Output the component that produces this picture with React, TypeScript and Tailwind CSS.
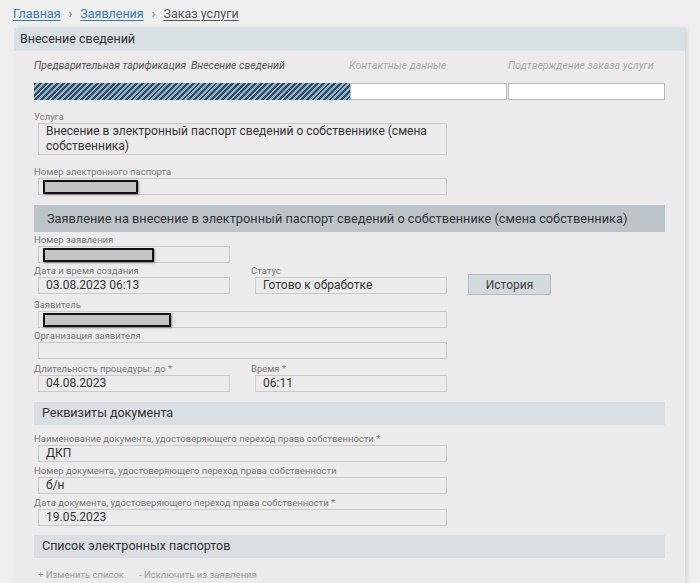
import React from "react";

const stripes =
  "bg-[repeating-linear-gradient(135deg,#2f4d66_0px,#2f4d66_2px,#8fb0c7_2px,#8fb0c7_4px)]";

function Label({ children }: { children: React.ReactNode }) {
  return <div className="h-[12px] leading-[12px] text-[9.5px] text-[#7a7a7a]">{children}</div>;
}

function Box({
  width = "w-[409px]",
  height = "h-[17px]",
  children,
}: {
  width?: string;
  height?: string;
  children?: React.ReactNode;
}) {
  return (
    <div
      className={`relative ml-[4px] ${width} ${height} border border-[#cacaca] bg-[#ebebeb] pl-[7px] text-[12px] leading-[15px] text-[#333]`}
    >
      {children}
    </div>
  );
}

function Redacted({ width }: { width: string }) {
  return (
    <div
      className={`absolute left-[4px] top-[1px] h-[14px] ${width} rounded-[1px] border-2 border-[#111] bg-[#c4c4c4] shadow-[1px_1px_2px_rgba(0,0,0,0.4)]`}
    />
  );
}

function SectionBar({ children, dark }: { children: React.ReactNode; dark?: boolean }) {
  return (
    <div
      className={
        dark
          ? "flex h-[27px] items-center bg-[#bcc4c9] pl-[13px] text-[12.75px] text-[#333]"
          : "flex h-[23px] items-center bg-[#d9dfe2] pl-[8px] text-[12.5px] text-[#333]"
      }
    >
      {children}
    </div>
  );
}

export default function App() {
  return (
    <div
      className="min-h-[583px] overflow-hidden bg-[#efefef] text-[#333]"
      style={{ fontFamily: 'Roboto, "Noto Sans", sans-serif' }}
    >
      {/* Breadcrumbs */}
      <div className="flex h-[28px] items-center gap-[8px] pl-[13px] text-[12.5px]">
        <span className="text-[#3b7bb0] underline decoration-[#3b7bb0] underline-offset-2">Главная</span>
        <span className="font-bold text-[#888]">›</span>
        <span className="text-[#3b7bb0] underline decoration-[#3b7bb0] underline-offset-2">Заявления</span>
        <span className="font-bold text-[#888]">›</span>
        <span className="text-[#555] underline underline-offset-2">Заказ услуги</span>
      </div>

      {/* Panel */}
      <div className="ml-[14px] min-h-[555px] w-[671px] bg-[#ebebeb] shadow-[2px_0_4px_rgba(0,0,0,0.12)]">
        <div className="flex h-[23px] items-center bg-[#d9e0e3] pl-[6px] text-[12.5px] text-[#333]">
          Внесение сведений
        </div>

        <div className="px-[20px]">
          {/* Steps */}
          <div className="grid grid-cols-[157px_158px_159px_157px] pt-[8px] text-[10.5px] italic leading-[14px]">
            <span className="text-[#555]">Предварительная тарификация</span>
            <span className="text-[#555]">Внесение сведений</span>
            <span className="text-[#aaa]">Контактные данные</span>
            <span className="text-[#aaa]">Подтверждение заказа услуги</span>
          </div>
          <div className="mt-[10px] flex h-[17px]">
            <div className={`w-[316px] ${stripes}`} />
            <div className="w-[157px] border border-[#b8b8b8] bg-white" />
            <div className="ml-[1px] w-[157px] border border-[#b8b8b8] bg-white" />
          </div>

          {/* Service */}
          <div className="mt-[11px]">
            <Label>Услуга</Label>
            <Box height="h-[32px]">
              Внесение в электронный паспорт сведений о собственнике (смена собственника)
            </Box>
          </div>
          <div className="mt-[11px]">
            <Label>Номер электронного паспорта</Label>
            <Box>
              <Redacted width="w-[95px]" />
            </Box>
          </div>

          <div className="mt-[10px]">
            <SectionBar dark>
              Заявление на внесение в электронный паспорт сведений о собственнике (смена собственника)
            </SectionBar>
          </div>

          <div className="mt-[2px]">
            <Label>Номер заявления</Label>
            <Box width="w-[192px]">
              <Redacted width="w-[111px]" />
            </Box>
          </div>

          <div className="mt-[2px] flex items-end">
            <div className="w-[217px]">
              <Label>Дата и время создания</Label>
              <Box width="w-[192px]">03.08.2023 06:13</Box>
            </div>
            <div className="w-[217px]">
              <Label>Статус</Label>
              <Box width="w-[192px]">Готово к обработке</Box>
            </div>
            <button className="mb-[-1px] h-[21px] w-[83px] border border-[#b4babe] bg-[#d3dadd] text-[12px] text-[#444]">
              История
            </button>
          </div>

          <div className="mt-[5px]">
            <Label>Заявитель</Label>
            <Box>
              <Redacted width="w-[128px]" />
            </Box>
          </div>
          <div className="mt-[2px]">
            <Label>Организация заявителя</Label>
            <Box />
          </div>

          <div className="mt-[4px] flex">
            <div className="w-[217px]">
              <Label>Длительность процедуры: до *</Label>
              <Box width="w-[192px]">04.08.2023</Box>
            </div>
            <div className="w-[217px]">
              <Label>Время *</Label>
              <Box width="w-[192px]">06:11</Box>
            </div>
          </div>

          <div className="mt-[10px]">
            <SectionBar>Реквизиты документа</SectionBar>
          </div>

          <div className="mt-[8px]">
            <Label>Наименование документа, удостоверяющего переход права собственности *</Label>
            <Box>ДКП</Box>
          </div>
          <div className="mt-[3px]">
            <Label>Номер документа, удостоверяющего переход права собственности</Label>
            <Box>б/н</Box>
          </div>
          <div className="mt-[3px]">
            <Label>Дата документа, удостоверяющего переход права собственности *</Label>
            <Box>19.05.2023</Box>
          </div>

          <div className="mt-[9px]">
            <SectionBar>Список электронных паспортов</SectionBar>
          </div>

          <div className="mt-[10px] flex gap-[15px] pl-[4px] text-[9.5px] text-[#999]">
            <span>+ Изменить список</span>
            <span>- Исключить из заявления</span>
          </div>
        </div>
      </div>
    </div>
  );
}
